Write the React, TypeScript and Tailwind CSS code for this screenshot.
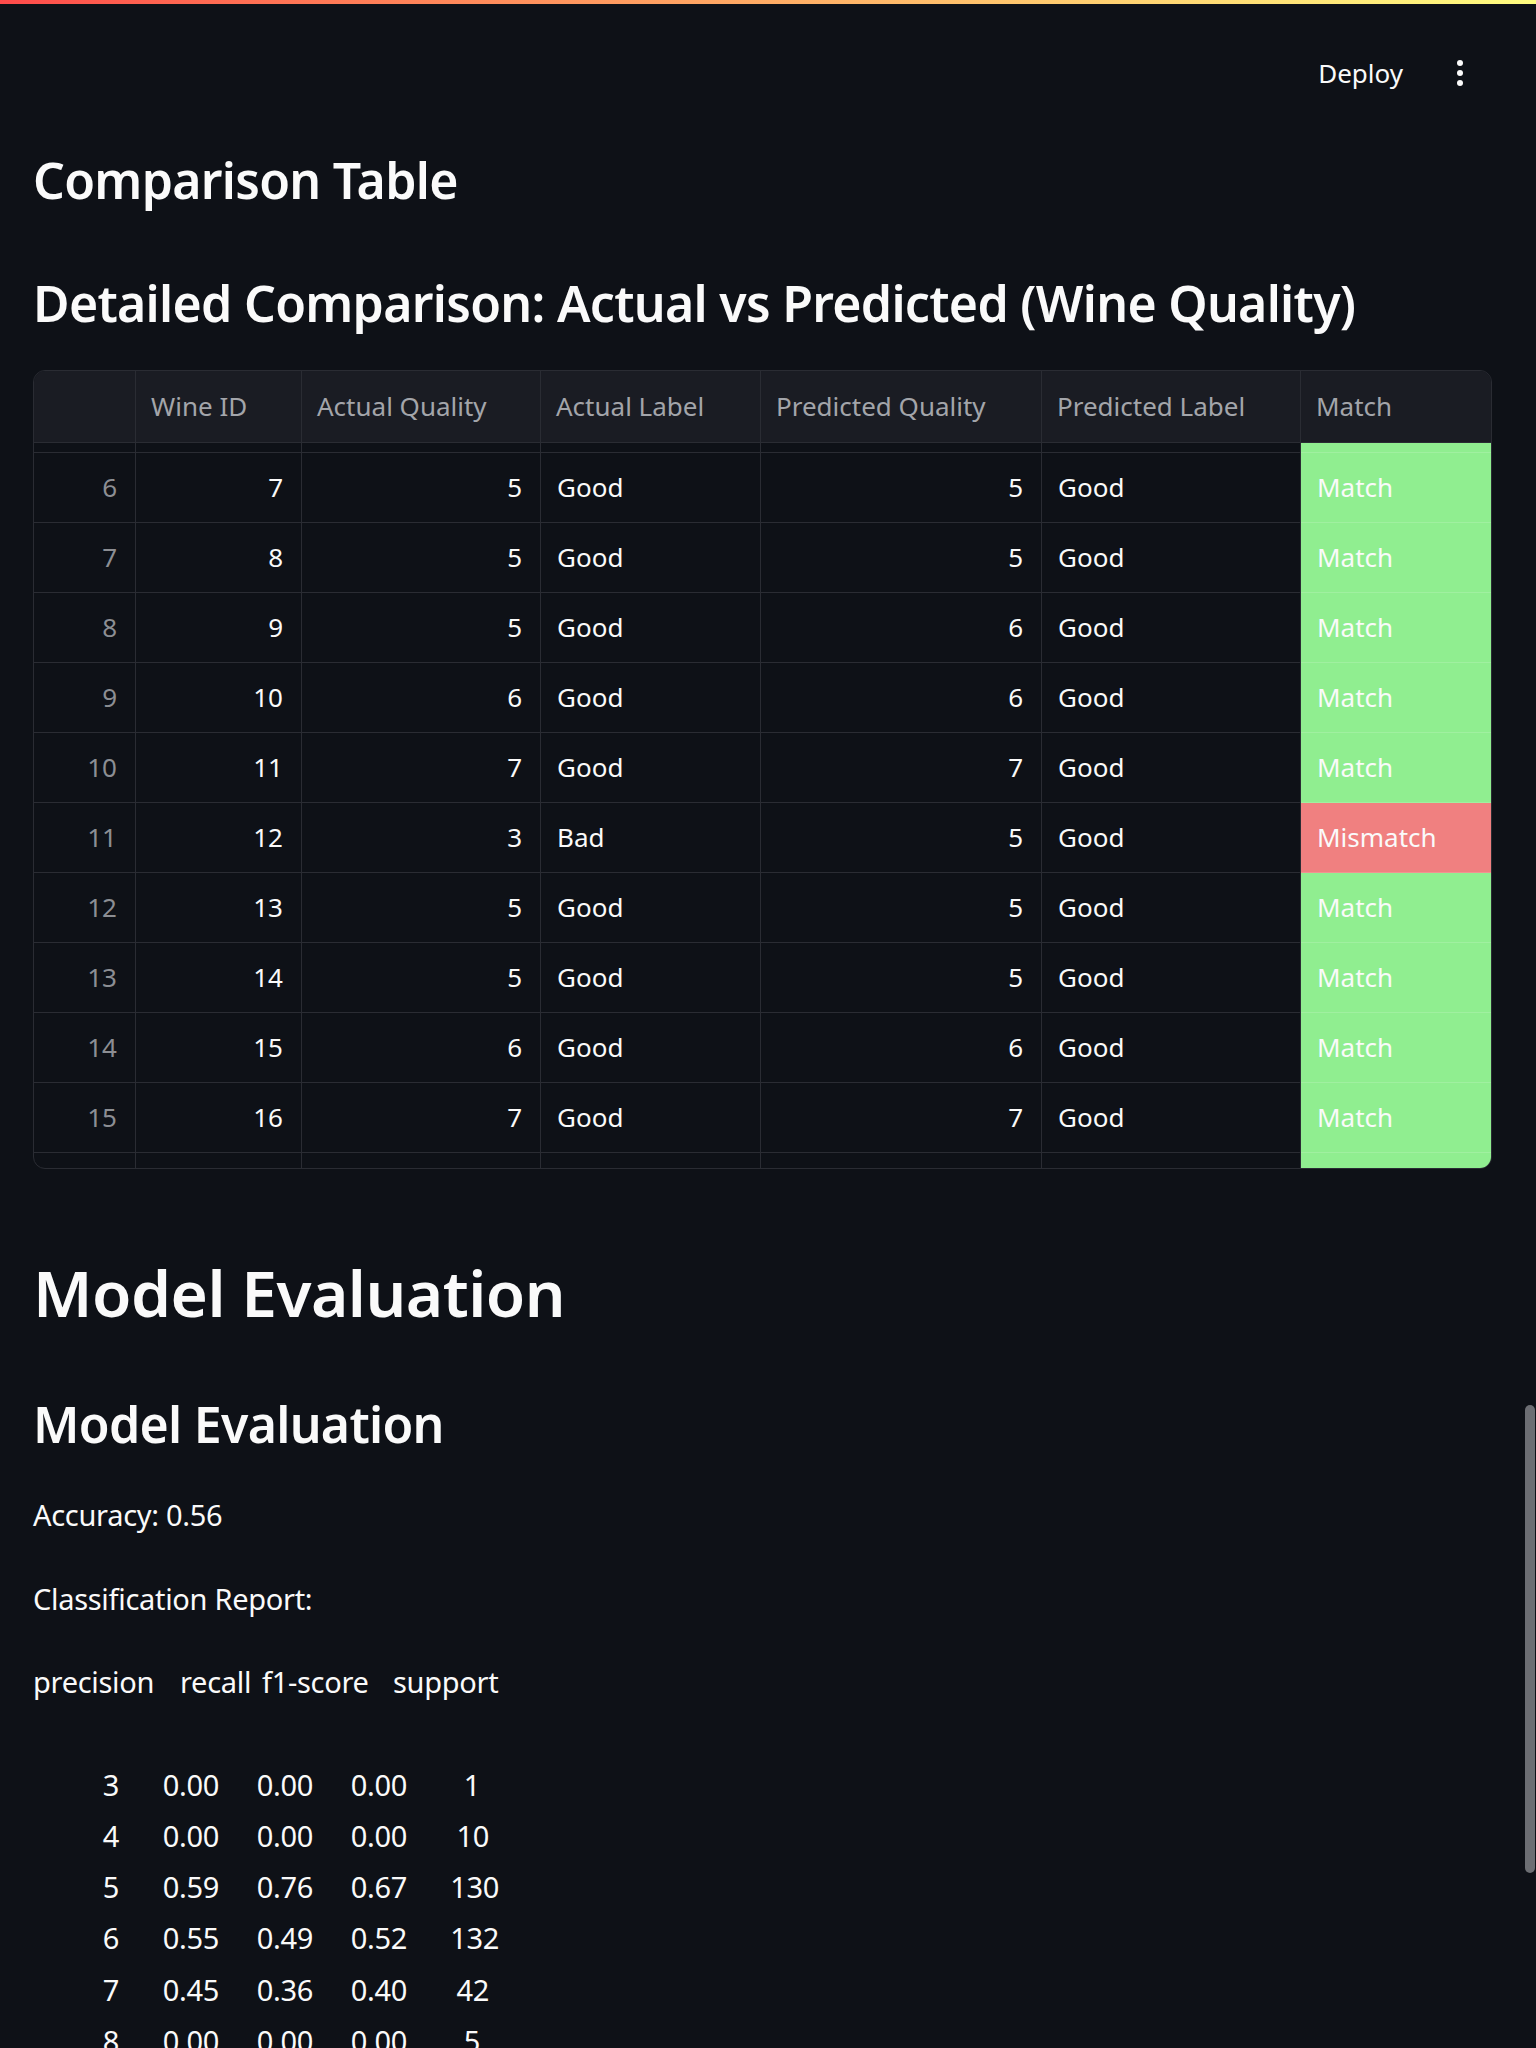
import React from "react";

interface Row {
  idx: number;
  wineId: number;
  actualQuality: number;
  actualLabel: string;
  predictedQuality: number;
  predictedLabel: string;
  match: string;
}

const rows: Row[] = [
  { idx: 6, wineId: 7, actualQuality: 5, actualLabel: "Good", predictedQuality: 5, predictedLabel: "Good", match: "Match" },
  { idx: 7, wineId: 8, actualQuality: 5, actualLabel: "Good", predictedQuality: 5, predictedLabel: "Good", match: "Match" },
  { idx: 8, wineId: 9, actualQuality: 5, actualLabel: "Good", predictedQuality: 6, predictedLabel: "Good", match: "Match" },
  { idx: 9, wineId: 10, actualQuality: 6, actualLabel: "Good", predictedQuality: 6, predictedLabel: "Good", match: "Match" },
  { idx: 10, wineId: 11, actualQuality: 7, actualLabel: "Good", predictedQuality: 7, predictedLabel: "Good", match: "Match" },
  { idx: 11, wineId: 12, actualQuality: 3, actualLabel: "Bad", predictedQuality: 5, predictedLabel: "Good", match: "Mismatch" },
  { idx: 12, wineId: 13, actualQuality: 5, actualLabel: "Good", predictedQuality: 5, predictedLabel: "Good", match: "Match" },
  { idx: 13, wineId: 14, actualQuality: 5, actualLabel: "Good", predictedQuality: 5, predictedLabel: "Good", match: "Match" },
  { idx: 14, wineId: 15, actualQuality: 6, actualLabel: "Good", predictedQuality: 6, predictedLabel: "Good", match: "Match" },
  { idx: 15, wineId: 16, actualQuality: 7, actualLabel: "Good", predictedQuality: 7, predictedLabel: "Good", match: "Match" },
];

const report = [
  { label: "3", p: "0.00", r: "0.00", f: "0.00", s: "1" },
  { label: "4", p: "0.00", r: "0.00", f: "0.00", s: "10" },
  { label: "5", p: "0.59", r: "0.76", f: "0.67", s: "130" },
  { label: "6", p: "0.55", r: "0.49", f: "0.52", s: "132" },
  { label: "7", p: "0.45", r: "0.36", f: "0.40", s: "42" },
  { label: "8", p: "0.00", r: "0.00", f: "0.00", s: "5" },
];

// support column is whitespace aligned in the original, so the width grows with the digits
const supportWidth: Record<number, string> = {
  1: "w-[73px]",
  2: "w-[82px]",
  3: "w-[92px]",
};

const cols = "grid grid-cols-[102px_166px_239px_220px_281px_259px_190px]";
const line = "border-[#2a2c33]";
const subheader = "text-[50px] font-semibold leading-[60px] tracking-[-0.7px]";

const App: React.FC = () => {
  return (
    <div className="relative h-[2048px] overflow-hidden bg-[#0e1117] text-[#fafafa] font-['Noto_Sans',sans-serif] [font-stretch:semi-condensed]">
      {/* top decoration */}
      <div className="h-1 bg-linear-to-r from-[#ff4b4b] to-[#fffd80]" />

      <header className="flex h-[146px] items-start justify-end pr-[56px] pt-[49px]">
        <span className="flex h-10 items-center text-[26px]">Deploy</span>
        <button className="ml-[37px] flex h-10 w-10 flex-col items-center justify-center gap-[3.3px]">
          <span className="h-[6.5px] w-[6.5px] rounded-full bg-[#fafafa]" />
          <span className="h-[6.5px] w-[6.5px] rounded-full bg-[#fafafa]" />
          <span className="h-[6.5px] w-[6.5px] rounded-full bg-[#fafafa]" />
        </button>
      </header>

      <main className="pl-[33px] pr-[44px]">
        <h3 className={subheader}>Comparison Table</h3>
        <h3 className={`mt-[63px] ${subheader}`}>
          Detailed Comparison: Actual vs Predicted (Wine Quality)
        </h3>

        {/* dataframe */}
        <div className={`mt-[37px] overflow-hidden rounded-[12px] border ${line} text-[26px]`}>
          <div className={`${cols} h-[72px] border-b ${line} bg-[#1a1c23] text-[#a3a5aa]`}>
            <div className={`border-r ${line}`} />
            <div className={`flex items-center border-r ${line} pl-[15px]`}>Wine ID</div>
            <div className={`flex items-center border-r ${line} pl-[15px]`}>Actual Quality</div>
            <div className={`flex items-center border-r ${line} pl-[15px]`}>Actual Label</div>
            <div className={`flex items-center border-r ${line} pl-[15px]`}>Predicted Quality</div>
            <div className={`flex items-center border-r ${line} pl-[15px]`}>Predicted Label</div>
            <div className="flex items-center pl-[15px]">Match</div>
          </div>

          {/* partially scrolled row above */}
          <div className={`${cols} h-[10px]`}>
            <div className={`border-r border-b ${line}`} />
            <div className={`border-r border-b ${line}`} />
            <div className={`border-r border-b ${line}`} />
            <div className={`border-r border-b ${line}`} />
            <div className={`border-r border-b ${line}`} />
            <div className={`border-r border-b ${line}`} />
            <div className="border-b border-white/15 bg-[#90ee90]" />
          </div>

          {rows.map((r) => {
            const ok = r.match === "Match";
            return (
              <div key={r.idx} className={`${cols} h-[70px]`}>
                <div className={`flex items-center justify-end border-r border-b ${line} pr-[18px] text-[#8c8e93]`}>
                  {r.idx}
                </div>
                <div className={`flex items-center justify-end border-r border-b ${line} pr-[18px]`}>
                  {r.wineId}
                </div>
                <div className={`flex items-center justify-end border-r border-b ${line} pr-[18px]`}>
                  {r.actualQuality}
                </div>
                <div className={`flex items-center border-r border-b ${line} pl-4`}>{r.actualLabel}</div>
                <div className={`flex items-center justify-end border-r border-b ${line} pr-[18px]`}>
                  {r.predictedQuality}
                </div>
                <div className={`flex items-center border-r border-b ${line} pl-4`}>{r.predictedLabel}</div>
                <div
                  className={`flex items-center border-b border-white/15 pl-4 ${
                    ok ? "bg-[#90ee90]" : "bg-[#f08080]"
                  }`}
                >
                  {r.match}
                </div>
              </div>
            );
          })}

          {/* partially visible row below */}
          <div className={`${cols} h-[15px]`}>
            <div className={`border-r ${line}`} />
            <div className={`border-r ${line}`} />
            <div className={`border-r ${line}`} />
            <div className={`border-r ${line}`} />
            <div className={`border-r ${line}`} />
            <div className={`border-r ${line}`} />
            <div className="bg-[#90ee90]" />
          </div>
        </div>

        <h1 className="mt-[85px] text-[64px] font-semibold leading-[77px] tracking-[-0.5px]">Model Evaluation</h1>
        <h3 className={`mt-[63px] ${subheader}`}>Model Evaluation</h3>

        <div className="text-[29px] leading-[51.2px] tracking-[-0.3px]">
          <p className="mt-[35px]">Accuracy: 0.56</p>
          <p className="mt-[33px]">Classification Report:</p>

          <div className="mt-[32px] flex">
            <span className="w-[147px]">precision</span>
            <span className="w-[82px]">recall</span>
            <span className="w-[131px]">f1-score</span>
            <span>support</span>
          </div>

          <div className="mt-[51.2px]">
            {report.map((r) => (
              <div key={r.label} className="flex text-right">
                <span className="w-[86px]">{r.label}</span>
                <span className="w-[100px]">{r.p}</span>
                <span className="w-[94px]">{r.r}</span>
                <span className="w-[94px]">{r.f}</span>
                <span className={supportWidth[r.s.length]}>{r.s}</span>
              </div>
            ))}
          </div>
        </div>
      </main>

      {/* overlay scrollbar */}
      <div className="absolute right-px top-[1405px] h-[468px] w-[10px] rounded-full bg-[#6c6e73]" />
    </div>
  );
};

export default App;
